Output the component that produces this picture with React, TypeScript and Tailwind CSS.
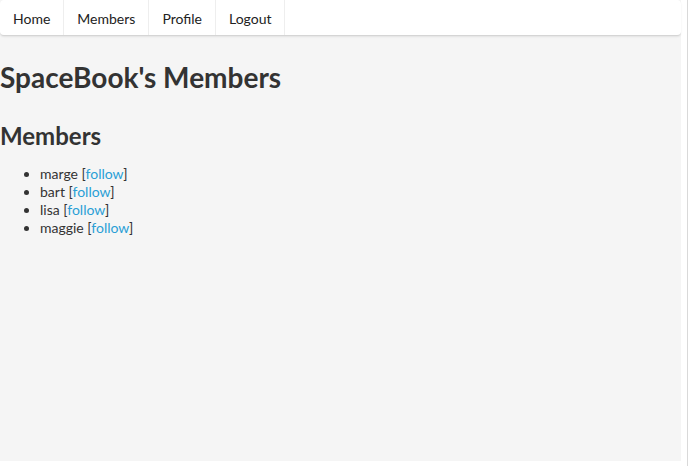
export default function App() {
  const members = ["marge", "bart", "lisa", "maggie"];
  const links = ["Home", "Members", "Profile", "Logout"];

  return (
    <div className="w-[688px] h-[466px] bg-white flex font-['Lato',sans-serif] text-[#333]">
      <div className="w-[681px] h-[461px] bg-[#f5f5f5]">
        <nav className="h-[36px] bg-white rounded-[4px] border-b border-[#d5d5d5] shadow-[0_1px_2px_rgba(0,0,0,0.08)] flex">
          {links.map((l) => (
            <a key={l} className="px-[13px] pt-[1px] text-[14px] leading-[35px] text-[#222] border-r border-[#eee]">
              {l}
            </a>
          ))}
        </nav>
        <h1 className="text-[28px] font-bold leading-[36px] mt-[23px]">SpaceBook's Members</h1>
        <h2 className="text-[24px] font-bold leading-[28px] mt-[27px]">Members</h2>
        <ul className="list-disc pl-[40px] mt-[15px] text-[14px] leading-[18px]">
          {members.map((m) => (
            <li key={m}>
              {m} [<a className="text-[#2a9fd6]">follow</a>]
            </li>
          ))}
        </ul>
      </div>
      <div className="w-[6px]" />
      <div className="w-[1px] h-full bg-[#d9d9d9]" />
    </div>
  );
}
